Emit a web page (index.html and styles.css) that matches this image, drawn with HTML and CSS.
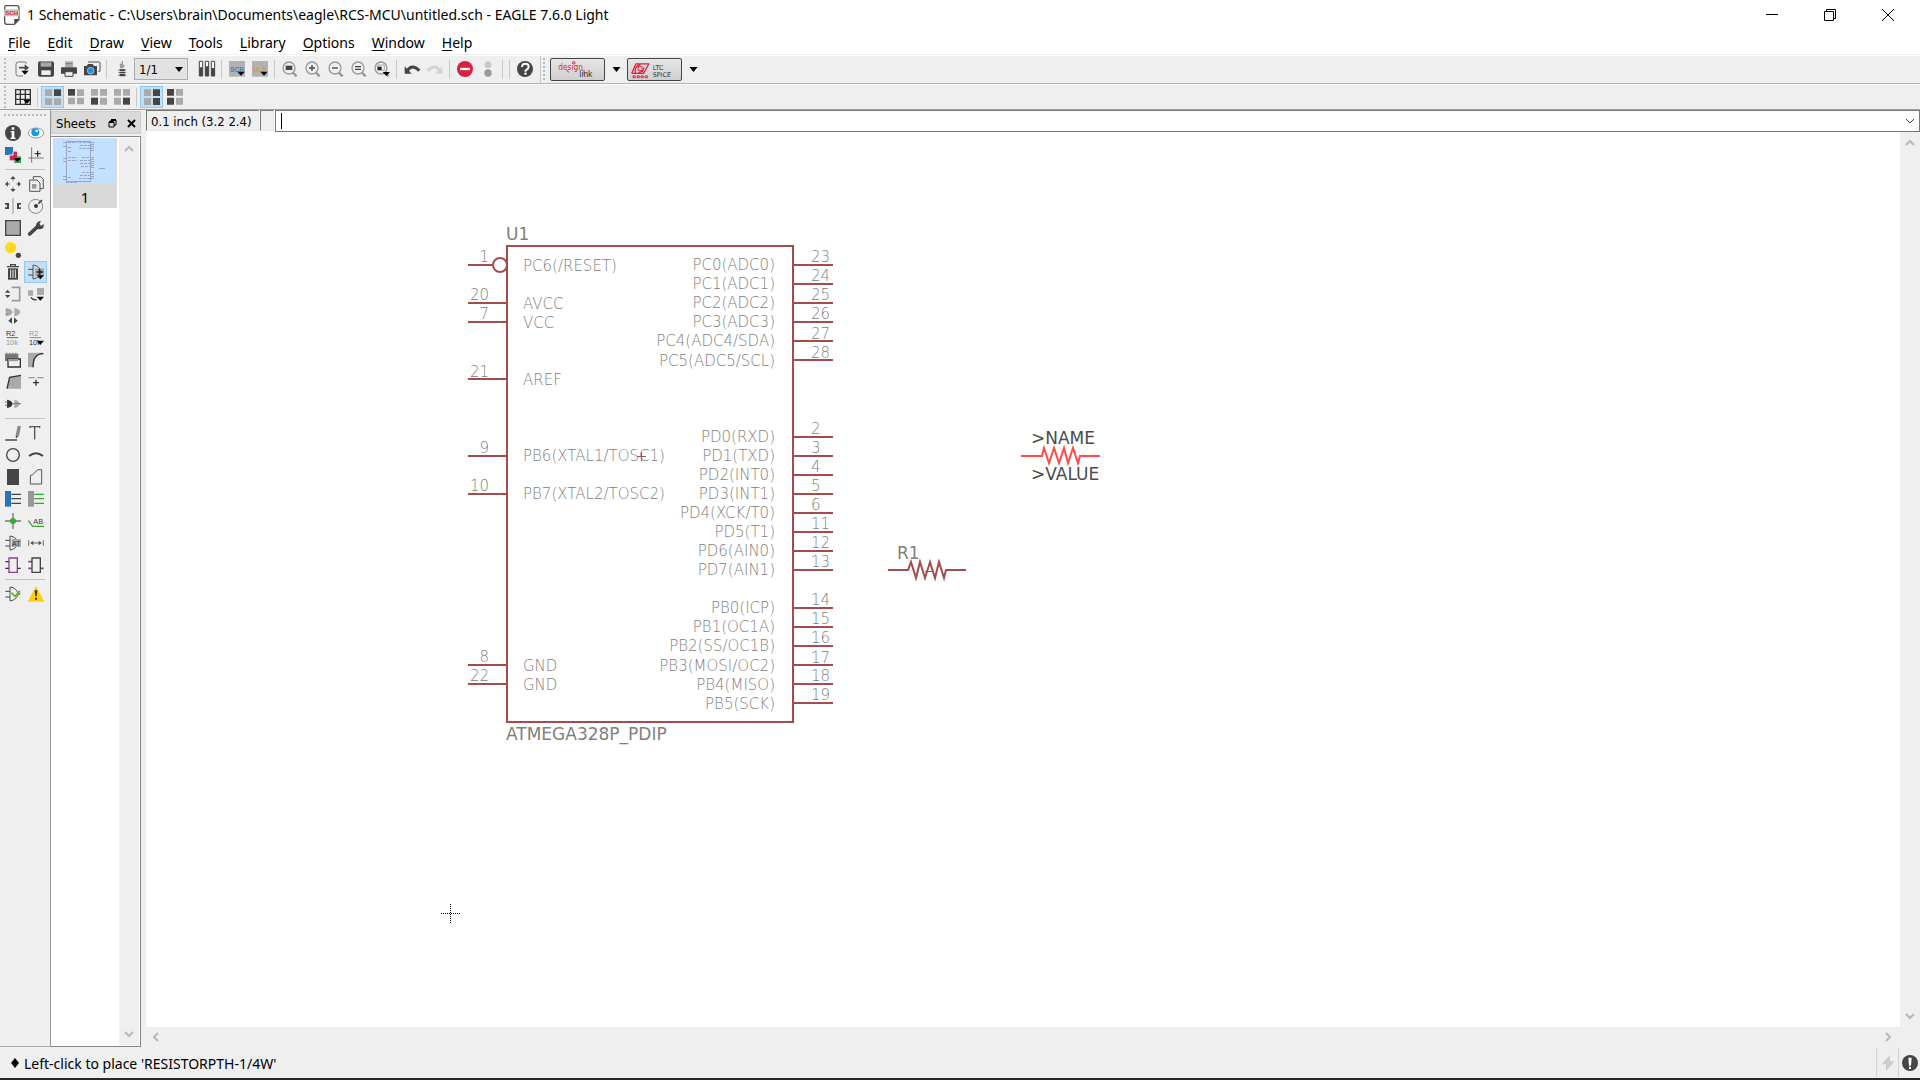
FILE: index.html
```html
<!DOCTYPE html>
<html lang="en">
<head>
<meta charset="utf-8">
<title>1 Schematic - EAGLE 7.6.0 Light</title>
<link rel="stylesheet" href="styles.css">
</head>
<body>
<svg class="defs" aria-hidden="true">
  <defs>
    <path id="drop" d="M19 29h22L30 41z" fill="#000"/>
    <g id="lens"><path d="M32 34l12 12" stroke="#999" stroke-width="7"/><circle cx="21" cy="21" r="18" fill="#efefef" stroke="#999" stroke-width="4"/></g>
    <g id="gate"><path d="M15 3q20 2 24 21q-4 18-24 21z" fill="none" stroke="#555" stroke-width="3"/><path d="M1 16h14M1 33h14M38 24h8" stroke="#444" stroke-width="3"/></g>
  </defs>
</svg>

<header class="titlebar">
  <svg class="app-icon" viewBox="0 0 48 60"><path d="M6 2h32q7 0 7 7v35L31 58H10q-8 0-8-8V9q0-7 4-7z" fill="#fff" stroke="#555" stroke-width="4"/><path d="M45 42H31v16z" fill="#444"/><rect x="0" y="13" width="46" height="21" fill="#c9c3c3"/><text x="23" y="31" class="app-icon-text">SCH</text></svg>
  <h1>1 Schematic - C:\Users\brain\Documents\eagle\RCS-MCU\untitled.sch - EAGLE 7.6.0 Light</h1>
  <div class="window-buttons">
    <button aria-label="Minimize"><svg viewBox="0 0 14 14"><path d="M1 6.5h12" class="win"/></svg></button>
    <button aria-label="Restore"><svg viewBox="0 0 14 14"><path d="M1.500 3.500h9v9h-9zM3.500 3.500v-2h9v9h-2" class="win"/></svg></button>
    <button aria-label="Close"><svg viewBox="0 0 14 14"><path d="M1 1l12 12M13 1L1 13" class="win"/></svg></button>
  </div>
</header>

<nav class="menubar">
  <a href="#file"><u>F</u>ile</a><a href="#edit"><u>E</u>dit</a><a href="#draw"><u>D</u>raw</a><a href="#view"><u>V</u>iew</a><a href="#tools"><u>T</u>ools</a><a href="#library"><u>L</u>ibrary</a><a href="#options"><u>O</u>ptions</a><a href="#window"><u>W</u>indow</a><a href="#help"><u>H</u>elp</a>
</nav>

<div class="toolbar">
  <span class="handle"></span>
  <button class="tool" aria-label="Open"><svg viewBox="0 0 48 48"><path d="M34 8V6q0-3-4-3H10Q3 3 3 10v28q0 7 7 7h14" fill="none" stroke="#777" stroke-width="3"/><path d="M12 20h22" stroke="#444" stroke-width="5"/><path d="M29 10l13 10-13 10z" fill="#444"/><use href="#drop"/></svg></button>
  <button class="tool" aria-label="Save"><svg viewBox="0 0 48 48"><path d="M6 1h36q6 0 6 6v34q0 6-6 6H6q-6 0-6-6V7q0-6 6-6z" fill="#454545"/><path d="M8 1h32v16H8z" fill="#aaa"/><path d="M10 28h28v14H10z" fill="#efefef"/><path d="M10 5h28" stroke="#666" stroke-width="2"/></svg></button>
  <button class="tool" aria-label="Print"><svg viewBox="0 0 48 48"><path d="M12 1h24v18H12z" fill="#aaa"/><path d="M14 8h20" stroke="#777" stroke-width="3"/><path d="M3 19h42q3 0 3 4v15H0V23q0-4 3-4z" fill="#454545"/><path d="M12 32h24v14H12z" fill="#efefef" stroke="#454545" stroke-width="3"/></svg></button>
  <button class="tool" aria-label="Export image"><svg viewBox="0 0 48 48"><path d="M12 3h34q2 0 2 3v25h-5" fill="none" stroke="#555" stroke-width="3"/><path d="M0 15h8l4-6h14l4 6h9v28H0z" fill="#454545"/><circle cx="20" cy="29" r="10" fill="#1696e0" stroke="#ddd" stroke-width="2"/></svg></button>
  <span class="sep"></span>
  <button class="tool" aria-label="Switch to board"><svg viewBox="0 0 48 48"><path d="M25 0v13" stroke="#999" stroke-width="4"/><path d="M17 7l15 5-4 10H18z" fill="#999"/><path d="M17 25h16v5H17zM17 32h16v5H17zM17 39h16v7H17z" fill="#454545"/><path d="M13 27h24M13 35h24M13 43h24" stroke="#454545" stroke-width="2"/></svg></button>
  <label class="sheet-select"><select aria-label="Sheet"><option>1/1</option></select><svg viewBox="0 0 8 5"><path d="M0 0h8L4 5z"/></svg></label>
  <span class="sep blank"></span>
  <button class="tool" aria-label="Use library"><svg viewBox="0 0 48 48"><path d="M1 1h10v44H1zM19 1h10v44H19zM37 1h10v44H37z" fill="#fff" stroke="#454545" stroke-width="3"/><path d="M1 19h10v26H1zM19 16h10v29H19zM37 21h10v24H37z" fill="#454545"/></svg></button>
  <span class="sep"></span>
  <button class="tool" aria-label="Script"><svg viewBox="0 0 48 48"><path d="M0 0h48v47H0z" fill="#b2b2b2"/><text x="24" y="32" class="tag blue">SCR</text><use href="#drop" x="6" y="3"/></svg></button>
  <button class="tool" aria-label="ULP"><svg viewBox="0 0 48 48"><path d="M0 0h48v47H0z" fill="#b2b2b2"/><text x="24" y="32" class="tag orange">ULP</text><use href="#drop" x="6" y="3"/></svg></button>
  <span class="sep"></span>
  <button class="tool" aria-label="Fit"><svg viewBox="0 0 48 48"><use href="#lens"/><path d="M11 14h20v13H11z" fill="#454545"/></svg></button>
  <button class="tool" aria-label="Zoom in"><svg viewBox="0 0 48 48"><use href="#lens"/><path d="M12 21h18M21 12v18" stroke="#454545" stroke-width="4"/></svg></button>
  <button class="tool" aria-label="Zoom out"><svg viewBox="0 0 48 48"><use href="#lens"/><path d="M12 21h18" stroke="#454545" stroke-width="4"/></svg></button>
  <button class="tool" aria-label="Redraw"><svg viewBox="0 0 48 48"><use href="#lens"/><path d="M12 17h18M12 25h18" stroke="#454545" stroke-width="4"/></svg></button>
  <button class="tool" aria-label="Select zoom"><svg viewBox="0 0 48 48"><use href="#lens"/><path d="M11 12h20v16H11z" fill="none" stroke="#888" stroke-width="2"/><path d="M11 17h12v10H11z" fill="#222"/><use href="#drop" x="7" y="4"/></svg></button>
  <span class="sep"></span>
  <button class="tool" aria-label="Undo"><svg viewBox="0 0 48 48"><path d="M10 29Q24 7 46 29" fill="none" stroke="#454545" stroke-width="9"/><path d="M2 16v22h21z" fill="#454545"/></svg></button>
  <button class="tool" aria-label="Redo"><svg viewBox="0 0 48 48"><path d="M38 29Q24 7 2 29" fill="none" stroke="#d2d2d2" stroke-width="9"/><path d="M46 16v22H25z" fill="#d2d2d2"/></svg></button>
  <span class="sep"></span>
  <button class="tool" aria-label="Stop"><svg viewBox="0 0 48 48"><circle cx="24" cy="24" r="24" fill="#dc1f3d"/><path d="M9 24h30" stroke="#fff" stroke-width="7"/></svg></button>
  <button class="tool" aria-label="Go"><svg viewBox="0 0 48 48"><circle cx="24" cy="11" r="10" fill="#c8c8c8"/><circle cx="24" cy="36" r="11" fill="#999"/></svg></button>
  <span class="sep"></span><span class="sep"></span>
  <button class="tool" aria-label="Help"><svg viewBox="0 0 48 48"><circle cx="24" cy="24" r="24" fill="#454545"/><path d="M15 18q0-10 10-10t10 9q0 5-6 9-4 2-4 6" fill="none" stroke="#fff" stroke-width="6"/><path d="M22 35h7v6h-7z" fill="#fff"/></svg></button>
  <span class="sep end"></span>
  <span class="handle"></span>
  <button class="brand" aria-label="Design link"><svg viewBox="0 0 165 66"><text x="22" y="34" class="logo red">design</text><text x="88" y="58" class="logo">link</text><circle cx="71" cy="12" r="4" fill="none" stroke="#dc1f3d" stroke-width="3"/><path d="M103 34v16M48 36l8 6" stroke="#dc1f3d" stroke-width="3"/></svg></button>
  <button class="more" aria-label="Design link menu"><svg viewBox="0 0 8 5"><path d="M0 0h8L4 5z"/></svg></button>
  <button class="brand" aria-label="LTC Spice"><svg viewBox="0 0 165 66"><path d="M24 15h42M11 45l13-30M11 45h37l17-30M22 45q-3-24 17-27M32 42q15 0 17-16" fill="none" stroke="#dc1f3d" stroke-width="4"/><path d="M31 24h12v12H31zM29 19l5 5M42 36l6 7" fill="none" stroke="#dc1f3d" stroke-width="3"/><path d="M15 53h7v6h-7zM28 53h7v6h-7zM40 53h7v6h-7zM53 53h7v6h-7z" fill="none" stroke="#dc1f3d" stroke-width="3"/><text x="77" y="35" class="spice">LTC</text><text x="77" y="57" class="spice">SPICE</text></svg></button>
  <button class="more" aria-label="LTC Spice menu"><svg viewBox="0 0 8 5"><path d="M0 0h8L4 5z"/></svg></button>
</div>

<div class="toolbar second">
  <span class="handle"></span>
  <button class="tool" aria-label="Grid"><svg viewBox="0 0 48 48"><path d="M2 2h44v44H2zM16 2v44M31 2v44M2 16h44M2 31h44" fill="none" stroke="#333" stroke-width="4"/><use href="#drop" x="6" y="3"/></svg></button>
  <span class="sep"></span>
  <button class="tool on" aria-label="Quadrant 1"><svg viewBox="0 0 48 48"><path d="M0 1h21v20H0zM0 28h21v20H0zM27 28h21v20H27z" fill="#aaa"/><path d="M27 1h21v20H27z" fill="#454545"/></svg></button>
  <button class="tool" aria-label="Quadrant 2"><svg viewBox="0 0 48 48"><path d="M27 1h21v20H27zM0 26h21v20H0zM27 26h21v20H27z" fill="#aaa"/><path d="M0 0h21v20H0z" fill="#454545"/></svg></button>
  <button class="tool" aria-label="Quadrant 3"><svg viewBox="0 0 48 48"><path d="M0 0h21v20H0zM27 0h21v20H27zM27 26h21v21H27z" fill="#aaa"/><path d="M0 26h21v21H0z" fill="#454545"/></svg></button>
  <button class="tool" aria-label="Quadrant 4"><svg viewBox="0 0 48 48"><path d="M0 0h21v20H0zM27 0h21v20H27zM0 26h21v21H0z" fill="#aaa"/><path d="M27 26h21v21H27z" fill="#454545"/></svg></button>
  <span class="sep"></span>
  <button class="tool on" aria-label="Right half"><svg viewBox="0 0 48 48"><path d="M0 1h21v20H0zM0 27h21v21H0z" fill="#aaa"/><path d="M27 1h21v20H27zM27 27h21v21H27z" fill="#454545"/></svg></button>
  <button class="tool" aria-label="Left half"><svg viewBox="0 0 48 48"><path d="M27 0h21v20H27zM27 26h21v21H27z" fill="#aaa"/><path d="M0 0h21v20H0zM0 26h21v21H0z" fill="#454545"/></svg></button>
</div>

<main class="workspace">
  <aside class="palette">
    <span class="handle wide"></span>
    <div class="tools">
      <button class="tool" aria-label="Info"><svg viewBox="0 0 48 48"><circle cx="24" cy="24" r="24" fill="#454545"/><path d="M20 7h8v7h-8zM17 18h11v20h4v4H16v-4h4V22h-3z" fill="#fff"/></svg></button>
      <button class="tool" aria-label="Show"><svg viewBox="0 0 48 48"><ellipse cx="24" cy="24" rx="23" ry="15" fill="#fff" stroke="#999" stroke-width="3"/><circle cx="22" cy="22" r="12" fill="#149be4"/><circle cx="26" cy="18" r="4" fill="#fff"/></svg></button>
      <button class="tool" aria-label="Layers"><svg viewBox="0 0 48 48"><path d="M28 28h20v20H28z" fill="#2ba84f"/><path d="M14 14h22v26H14z" fill="#dc1f4d"/><path d="M0 0h24v24H0z" fill="#2675bb"/><path d="M24 14v10H12" fill="none" stroke="#efefef" stroke-width="3"/><use href="#drop" x="7" y="4"/></svg></button>
      <button class="tool" aria-label="Mark"><svg viewBox="0 0 48 48"><path d="M11 1v46M1 33h46" stroke="#777" stroke-width="3"/><path d="M29 11v18M20 20h18" stroke="#333" stroke-width="4"/></svg></button>
    </div>
    <hr>
    <div class="tools">
      <button class="tool" aria-label="Move"><svg viewBox="0 0 48 48"><path d="M24 0l8 9H16zM24 48l8-9H16zM0 24l9-8v16zM48 24l-9-8v16z" fill="#454545"/><path d="M24 8v6M24 34v6M8 24h6M34 24h6" stroke="#888" stroke-width="4"/></svg></button>
      <button class="tool" aria-label="Copy"><svg viewBox="0 0 48 48"><path d="M16 10V2h22l8 8v28H36M5 12h22l9 9v25H5z" fill="none" stroke="#555" stroke-width="3"/><path d="M12 24h13v14H12z" fill="#999"/></svg></button>
      <button class="tool" aria-label="Mirror"><svg viewBox="0 0 48 48"><path d="M24 1v46" stroke="#aaa" stroke-width="4"/><path d="M0 15h12v18H0v-5h6v-8H0zM48 15H36v18h12v-5h-6v-8h6z" fill="#454545"/></svg></button>
      <button class="tool" aria-label="Rotate"><svg viewBox="0 0 48 48"><circle cx="23" cy="25" r="21" fill="none" stroke="#888" stroke-width="3"/><circle cx="24" cy="24" r="6" fill="#333"/><path d="M31 17l11-11" stroke="#444" stroke-width="5"/></svg></button>
      <button class="tool" aria-label="Group"><svg viewBox="0 0 48 48"><path d="M2 2h44v44H2z" fill="#aaa" stroke="#454545" stroke-width="4"/></svg></button>
      <button class="tool" aria-label="Change"><svg viewBox="0 0 48 48"><path d="M5 42L32 17" stroke="#454545" stroke-width="11" stroke-linecap="round"/><path d="M39 3l-5 10 5 5 8-6q3 16-13 16-12-1-10-13Q27 3 39 3z" fill="#454545"/></svg></button>
      <button class="tool" aria-label="Paste"><svg viewBox="0 0 48 48"><circle cx="17" cy="17" r="17" fill="#fed923"/><circle cx="40" cy="40" r="8" fill="#454545"/></svg></button>
      <span></span>
      <button class="tool" aria-label="Delete"><svg viewBox="0 0 48 48"><path d="M6 8h36M17 7V2h14v5" fill="none" stroke="#454545" stroke-width="4"/><path d="M9 13h30v34H9z" fill="#454545"/><path d="M17 17v25M24 17v25M31 17v25" stroke="#eee" stroke-width="3"/></svg></button>
      <button class="tool on" aria-label="Add"><svg viewBox="0 0 48 48"><path d="M21 13h27v23H21z" fill="#aaa"/><use href="#gate"/><path d="M34 15v18M26 24h18" stroke="#222" stroke-width="4"/><use href="#drop" x="7" y="5"/></svg></button>
      <button class="tool" aria-label="Pinswap"><svg viewBox="0 0 48 48"><path d="M20 4h24v40H20" fill="none" stroke="#999" stroke-width="5"/><path d="M0 20l8-9 8 9zM0 27l8 9 8-9z" fill="#454545"/></svg></button>
      <button class="tool" aria-label="Replace"><svg viewBox="0 0 48 48"><path d="M0 13h15v16H0zM27 6h21v21H27z" fill="#aaa"/><path d="M9 34q4 9 17 7" fill="none" stroke="#454545" stroke-width="4"/><use href="#drop" x="7" y="3"/></svg></button>
      <button class="tool" aria-label="Gateswap"><svg viewBox="0 0 48 48"><path d="M3 0q17 2 20 12Q20 23 3 25zM28 0q15 2 18 12-3 11-18 13z" fill="#aaa"/><path d="M0 7h9M0 18h9" stroke="#999" stroke-width="3"/><path d="M21 28v19l-11-9zM27 28v19l11-9z" fill="#454545"/></svg></button>
      <span></span>
      <button class="tool" aria-label="Name"><svg viewBox="0 0 48 48"><text x="3" y="17" class="rlabel">R2</text><path d="M5 23h34" stroke="#666" stroke-width="3"/><text x="3" y="46" class="rlabel pale">10k</text></svg></button>
      <button class="tool" aria-label="Value"><svg viewBox="0 0 48 48"><text x="3" y="17" class="rlabel pale">R2</text><path d="M5 23h34" stroke="#888" stroke-width="3"/><text x="3" y="46" class="rlabel">10k</text><use href="#drop" x="7" y="3"/></svg></button>
      <button class="tool" aria-label="Smash"><svg viewBox="0 0 48 48"><path d="M0 5h40v22H0z" fill="#777"/><path d="M5 2v6M14 2v6M23 2v6M32 2v6" stroke="#888" stroke-width="4"/><path d="M9 21h37v24H9z" fill="#efefef" stroke="#333" stroke-width="4"/><path d="M9 24h30" stroke="#999" stroke-width="7"/></svg></button>
      <button class="tool" aria-label="Miter"><svg viewBox="0 0 48 48"><path d="M0 2h46v5Q18 5 18 46H0z" fill="#aaa"/><path d="M15 46Q14 5 46 5" fill="none" stroke="#333" stroke-width="4"/></svg></button>
      <button class="tool" aria-label="Split"><svg viewBox="0 0 48 48"><path d="M12 10L48 4v40H6z" fill="#aaa"/><path d="M6 44l8-34L48 4" fill="none" stroke="#333" stroke-width="4"/></svg></button>
      <button class="tool" aria-label="Invoke"><svg viewBox="0 0 48 48"><path d="M1 11h19M28 11h19" stroke="#999" stroke-width="4"/><path d="M24 17v18M15 26h18" stroke="#333" stroke-width="4"/></svg></button>
      <button class="tool" aria-label="Optimize"><svg viewBox="0 0 48 48"><path d="M28 11q13 2 16 12-3 11-16 13z" fill="#aaa"/><path d="M6 11q14 2 17 12-3 11-17 13z" fill="#333"/><path d="M0 18h8M0 28h8M23 23h25" stroke="#777" stroke-width="3"/></svg></button>
      <span></span>
    </div>
    <hr>
    <div class="tools">
      <button class="tool" aria-label="Line"><svg viewBox="0 0 48 48"><path d="M43 3l-6 28" stroke="#888" stroke-width="10"/><path d="M32 31l9 2-8 7z" fill="#444"/><path d="M1 45h35" stroke="#333" stroke-width="4"/></svg></button>
      <button class="tool" aria-label="Text"><svg viewBox="0 0 48 48"><path d="M6 9V5h29v4M20 5v38" fill="none" stroke="#555" stroke-width="4"/></svg></button>
      <button class="tool" aria-label="Circle"><svg viewBox="0 0 48 48"><circle cx="24" cy="24" r="19" fill="none" stroke="#454545" stroke-width="4"/></svg></button>
      <button class="tool" aria-label="Arc"><svg viewBox="0 0 48 48"><path d="M3 27q21-17 42 0" fill="none" stroke="#454545" stroke-width="6"/></svg></button>
      <button class="tool" aria-label="Rectangle"><svg viewBox="0 0 48 48"><path d="M6 0h36v48H6z" fill="#454545"/></svg></button>
      <button class="tool" aria-label="Polygon"><svg viewBox="0 0 48 48"><path d="M7 45V20l7-3 10-10 6-5h11v43z" fill="none" stroke="#555" stroke-width="3"/></svg></button>
      <button class="tool" aria-label="Bus"><svg viewBox="0 0 48 48"><path d="M19 10h29M19 23h29M19 37h29" stroke="#454545" stroke-width="4"/><path d="M0 0h18v47H0z" fill="#2675bb"/></svg></button>
      <button class="tool" aria-label="Net"><svg viewBox="0 0 48 48"><path d="M19 10h29M19 23h29M19 37h29" stroke="#36a936" stroke-width="4"/><path d="M0 0h18v47H0z" fill="#999"/></svg></button>
      <button class="tool" aria-label="Junction"><svg viewBox="0 0 48 48"><path d="M24 0v48M0 24h48" stroke="#777" stroke-width="4"/><circle cx="24" cy="24" r="9" fill="#36a936"/></svg></button>
      <button class="tool" aria-label="Label"><svg viewBox="0 0 48 48"><path d="M1 23l13 17h34" fill="none" stroke="#36a936" stroke-width="4"/><text x="16" y="33" class="rlabel">AB</text></svg></button>
      <button class="tool" aria-label="Attribute"><svg viewBox="0 0 48 48"><use href="#gate"/><path d="M20 12h28v24H20z" fill="#aaa"/><text x="20" y="33" class="rlabel">AT</text></svg></button>
      <button class="tool" aria-label="Dimension"><svg viewBox="0 0 48 48"><path d="M2 16v16M46 16v16M8 24h32" stroke="#666" stroke-width="3"/><path d="M7 24l9-7v14zM41 24l-9-7v14z" fill="#555"/></svg></button>
      <button class="tool" aria-label="Module"><svg viewBox="0 0 48 48"><path d="M1 14h12M1 34h12M36 34h11" stroke="#333" stroke-width="4"/><path d="M12 3h25v43H12z" fill="#efefef" stroke="#8b3f9b" stroke-width="4"/></svg></button>
      <button class="tool" aria-label="Port"><svg viewBox="0 0 48 48"><path d="M1 14h12M1 34h12M36 34h11" stroke="#8b3f9b" stroke-width="5"/><path d="M12 3h25v43H12z" fill="#efefef" stroke="#454545" stroke-width="4"/></svg></button>
    </div>
    <hr>
    <div class="tools">
      <button class="tool" aria-label="ERC"><svg viewBox="0 0 48 48"><use href="#gate"/><path d="M19 20l11 11 15-16" fill="none" stroke="#6cb82c" stroke-width="6"/></svg></button>
      <button class="tool" aria-label="Errors"><svg viewBox="0 0 48 48"><path d="M24 2l23 44H1z" fill="#ffcd05" stroke="#ffcd05" stroke-width="2"/><path d="M20 13h8l-2 18h-4zM21 35h6v6h-6z" fill="#333"/></svg></button>
    </div>
  </aside>

  <section class="sheets">
    <header class="dock-title"><h2>Sheets</h2>
      <button aria-label="Float"><svg viewBox="0 0 9 9"><path d="M3 3V1h5v5H6M1 3h5v5H1z" fill="none" stroke="#000"/><path d="M3 1h5M1 3h5" stroke="#000" stroke-width="2"/></svg></button>
      <button aria-label="Close sheets"><svg viewBox="0 0 9 9"><path d="M1 1l7 7M8 1L1 8" stroke="#000" stroke-width="2"/></svg></button>
    </header>
    <div class="sheet-list">
      <div class="sheet">
        <svg class="thumb" viewBox="0 0 61 46"><g fill="none" stroke="#9aa3cc"><path d="M12.500 3.500h24v40h-24z"/><path d="M14 4.500h9M14 9.500h3M14 13.500h3M14 19.500h9M14 22.500h9M14 39.500h3M25 4.500h12M26 7.500h10M25 10.500h11M28 19.500h9M26 22.500h10M26 25.500h11M27 28.500h9M28 34.500h8M26 37.500h10M25 40.500h11M12 44.500h12" stroke-dasharray="3 1"/><path d="M9 4.500h4M9 8.500h4M9 20.500h4M9 23.500h4M9 38.500h4M9 41.500h4M36 4.500h4M36 6.500h4M36 8.500h4M36 10.500h4M36 12.500h4M36 19.500h4M36 21.500h4M36 23.500h4M36 25.500h4M36 27.500h4M36 29.500h4M36 34.500h4M36 36.500h4M36 38.500h4M36 40.500h4"/><path d="M45 30.500h6"/></g></svg>
        <span>1</span>
      </div>
      <div class="vscroll"><svg viewBox="0 0 10 7"><path d="M1 6l4-4 4 4"/></svg><svg viewBox="0 0 10 7"><path d="M1 1l4 4 4-4"/></svg></div>
    </div>
  </section>

  <section class="editor">
    <div class="command-row">
      <output class="coords">0.1 inch (3.2 2.4)</output>
      <span class="slot"></span>
      <div class="command"><span class="caret"></span><input type="text" aria-label="Command"><button aria-label="Command history"><svg viewBox="0 0 10 7"><path d="M1 1l4 4 4-4"/></svg></button></div>
    </div>
    <div class="sheet-area">
      <svg class="drawing">
        <g transform="translate(-146 -132)">
          <g class="pins">
            <path d="M507 246h286v476H507z"/>
            <path d="M468 265h24M468 303h39M468 322h39M468 379h39M468 456h39M468 494h39M468 665h39M468 684h39"/>
            <path d="M793 265h40M793 284h40M793 303h40M793 322h40M793 341h40M793 360h40M793 437h40M793 456h40M793 475h40M793 494h40M793 513h40M793 532h40M793 551h40M793 570h40M793 608h40M793 627h40M793 646h40M793 665h40M793 684h40M793 703h40"/>
            <circle cx="500" cy="265" r="7"/>
            <path d="M888 570h20l3-8 5 16 4-16 5 16 5-16 5 16 4-16 5 16 2-8h20"/>
            <path class="origin" d="M925 571.500h7"/>
            <path class="placing" d="M1021 456h21l2-8 5 15 5-15 5 15 5-15 4 15 5-15 5 15 2-7h20"/>
          </g>
          <path class="origin" d="M637 456.500h9M641.500 452v9"/>
          <path class="cursor" d="M441 913.500h19M450.500 904v19"/>
          <g class="pin-text">
            <text x="523" y="271">PC6(/RESET)</text><text x="523" y="309">AVCC</text><text x="523" y="328">VCC</text><text x="523" y="385">AREF</text><text x="523" y="461">PB6(XTAL1/TOSC1)</text><text x="523" y="499">PB7(XTAL2/TOSC2)</text><text x="523" y="671">GND</text><text x="523" y="690">GND</text>
          </g>
          <g class="pin-text end">
            <text x="775" y="270">PC0(ADC0)</text><text x="775" y="289">PC1(ADC1)</text><text x="775" y="308">PC2(ADC2)</text><text x="775" y="327">PC3(ADC3)</text><text x="775" y="346">PC4(ADC4/SDA)</text><text x="775" y="366">PC5(ADC5/SCL)</text>
            <text x="775" y="442">PD0(RXD)</text><text x="775" y="461">PD1(TXD)</text><text x="775" y="480">PD2(INT0)</text><text x="775" y="499">PD3(INT1)</text><text x="775" y="518">PD4(XCK/T0)</text><text x="775" y="537">PD5(T1)</text><text x="775" y="556">PD6(AIN0)</text><text x="775" y="575">PD7(AIN1)</text>
            <text x="775" y="613">PB0(ICP)</text><text x="775" y="632">PB1(OC1A)</text><text x="775" y="651">PB2(SS/OC1B)</text><text x="775" y="671">PB3(MOSI/OC2)</text><text x="775" y="690">PB4(MISO)</text><text x="775" y="709">PB5(SCK)</text>
            <text x="489" y="262">1</text><text x="489" y="300">20</text><text x="489" y="319">7</text><text x="489" y="377">21</text><text x="489" y="453">9</text><text x="489" y="491">10</text><text x="489" y="662">8</text><text x="489" y="681">22</text>
          </g>
          <g class="pin-text">
            <text x="811" y="262">23</text><text x="811" y="281">24</text><text x="811" y="300">25</text><text x="811" y="319">26</text><text x="811" y="339">27</text><text x="811" y="358">28</text>
            <text x="811" y="434">2</text><text x="811" y="453">3</text><text x="811" y="472">4</text><text x="811" y="491">5</text><text x="811" y="510">6</text><text x="811" y="529">11</text><text x="811" y="548">12</text><text x="811" y="567">13</text>
            <text x="811" y="605">14</text><text x="811" y="624">15</text><text x="811" y="643">16</text><text x="811" y="663">17</text><text x="811" y="681">18</text><text x="811" y="700">19</text>
          </g>
          <g class="part-text">
            <text x="506" y="240">U1</text><text x="506" y="740">ATMEGA328P_PDIP</text><text x="897" y="559">R1</text>
            <text x="1031" y="444" class="dark">&gt;NAME</text><text x="1031" y="480" class="dark">&gt;VALUE</text>
          </g>
        </g>
      </svg>
      <div class="vscroll"><svg viewBox="0 0 10 7"><path d="M1 6l4-4 4 4"/></svg><svg viewBox="0 0 10 7"><path d="M1 1l4 4 4-4"/></svg></div>
      <div class="hscroll"><svg viewBox="0 0 7 10"><path d="M6 1L2 5l4 4"/></svg><svg viewBox="0 0 7 10"><path d="M1 1l4 4-4 4"/></svg></div>
    </div>
  </section>
</main>

<footer class="statusbar">
  <svg class="diamond" viewBox="0 0 8 10"><path d="M4 0l4 5-4 5-4-5z"/></svg>
  <p>Left-click to place 'RESISTORPTH-1/4W'</p>
  <span class="status-cell"><svg viewBox="0 0 48 48"><path d="M30 0L4 28h14v20l26-29H30z" fill="#ccc"/></svg></span>
  <span class="status-cell"><svg viewBox="0 0 48 48"><circle cx="24" cy="24" r="24" fill="#454545"/><path d="M19 8h10l-2 24h-6zM21 35h6v7h-6z" fill="#fff"/></svg></span>
</footer>
</body>
</html>
```
FILE: styles.css
```css
* { box-sizing: border-box; }
body {
  margin: 0;
  height: 100vh;
  display: flex;
  flex-direction: column;
  overflow: hidden;
  background: #efefef;
  color: #000;
  font: 15px/20px "Noto Sans", sans-serif;
}
button { border: 0; padding: 0; background: none; display: grid; place-items: center; }
h1, h2, p { margin: 0; font: inherit; }
svg { display: block; }
.defs { position: absolute; width: 0; height: 0; }

.titlebar { display: flex; align-items: center; height: 29px; padding-left: 4px; background: #fff; flex: none; }
.titlebar h1 { margin-left: 7px; flex: 1; font-size: 14px; }
.app-icon { width: 16px; height: 20px; }
.app-icon-text { font: bold 18px "Liberation Sans", sans-serif; fill: #d8303c; text-anchor: middle; }
.window-buttons { display: flex; padding-right: 3px; }
.window-buttons button { width: 58px; height: 28px; }
.window-buttons svg { width: 14px; height: 14px; }
.win { fill: none; stroke: #000; }

.menubar { display: flex; gap: 17px; height: 27px; padding: 4px 8px 0; background: #fff; border-bottom: 1px solid #fff; box-shadow: inset 0 -1px #efefef; flex: none; font-size: 14px; }
.menubar a { color: inherit; text-decoration: none; }
.menubar u { text-underline-offset: 2px; }

.toolbar { display: flex; align-items: center; height: 28px; flex: none; border-bottom: 1px solid #b4b4b4; box-shadow: 0 1px #fff; margin-bottom: 1px; padding: 0 0 1px 4px; }
.toolbar.second { height: 25px; border-bottom-color: #a0a0a0; margin-bottom: 0; padding-bottom: 0; box-shadow: none; }
.handle { width: 2px; height: 22px; margin-right: 5px; background: repeating-linear-gradient(#bbb 0 2px, transparent 2px 4px); }
.handle.wide { display: block; width: 42px; height: 2px; margin: 0 0 6px; background: repeating-linear-gradient(90deg, #bbb 0 2px, transparent 2px 4px); }
.tool { width: 23px; height: 22px; flex: none; }
.tool svg { width: 16px; height: 16px; overflow: visible; }
.tool.on { background: #c4def4; border: 1px solid #90c8f6; }
.sep { width: 7px; height: 19px; background: linear-gradient(#c8c8c8, #c8c8c8) center / 1px 100% no-repeat; }
.sep.blank { background: none; }
.sep.end { width: 5px; height: 27px; background-position: right; margin-right: 2px; }
.tag { font: bold 20px "Liberation Sans", sans-serif; text-anchor: middle; }
.blue { fill: #3f83c8; }
.orange { fill: #e5933c; }
.rlabel { font: 22px "Liberation Sans", sans-serif; fill: #333; }
.pale { fill: #999; }

.sheet-select { display: grid; width: 54px; height: 22px; align-items: center; margin-left: 1px; }
.sheet-select > * { grid-area: 1 / 1; }
.sheet-select select { appearance: none; width: 54px; height: 22px; border: 1px solid #adadad; border-radius: 0; background: #e2e2e2; padding: 0 4px; font: 13px "DejaVu Sans Condensed", "DejaVu Sans", sans-serif; color: #000; }
.sheet-select svg { justify-self: end; margin-right: 5px; width: 8px; height: 5px; pointer-events: none; }
.brand { width: 55px; height: 23px; border: 1px solid #444; border-radius: 2px; background: linear-gradient(#e6e6e6, #cfcfcf); }
.brand svg { width: 53px; height: 21px; }
.more { width: 22px; height: 22px; }
.more svg { width: 9px; height: 5px; }
.logo { font: 26px "DejaVu Sans Condensed", "DejaVu Sans", sans-serif; fill: #222; }
.logo.red { fill: #dc1f3d; }
.spice { font: 20px "DejaVu Sans", sans-serif; fill: #333; }

.workspace { flex: 1; display: flex; min-height: 0; }
.palette { width: 51px; padding: 4px 0 0 1px; border-right: 1px solid #999; border-bottom: 1px solid #aaa; }
.palette .handle { margin-left: 3px; }
.palette hr { width: 40px; height: 1px; margin: 3px 0 3px 4px; border: 0; background: #c4c4c4; }
.tools { display: grid; grid-template-columns: 23px 23px; grid-auto-rows: 22px; }

.sheets { width: 90px; display: flex; flex-direction: column; padding-top: 1px; }
.dock-title { display: flex; align-items: center; gap: 10px; height: 23px; padding: 1px 4px 0; background: #dadada; border: 1px solid #cdcdcd; }
.dock-title h2 { flex: 1; font: 13px "DejaVu Sans Condensed", "DejaVu Sans", sans-serif; }
.dock-title svg { width: 9px; height: 9px; }
.sheet-list { flex: 1; display: flex; justify-content: space-between; margin-top: 2px; border: 1px solid #828790; border-left: 0; background: #fff; padding: 1px 1px 1px 2px; }
.sheet { width: 64px; height: 70px; background: #d9d9d9; text-align: center; padding: 0 1px; }
.sheet span { display: block; padding-top: 3px; }
.thumb { width: 61px; height: 46px; background: #c4e0ff; }
.vscroll { width: 20px; background: #efefef; display: flex; flex-direction: column; align-items: center; justify-content: space-between; padding: 7px 0; }
.vscroll svg { width: 10px; height: 7px; }
.vscroll path, .hscroll path { fill: none; stroke: #b8b8b8; stroke-width: 2; }

.editor { flex: 1; display: flex; flex-direction: column; min-width: 0; padding-left: 5px; }
.command-row { display: flex; height: 22px; background: #fff; }
.coords { width: 113px; height: 21px; margin-right: 1px; padding: 1px 0 0 4px; border: 1px solid #e8e8e8; border-left-color: #777; border-top: 1px solid #777; background: #efefef; font: 13px/19px "DejaVu Sans Condensed", "DejaVu Sans", sans-serif; white-space: nowrap; }
.slot { width: 14px; height: 21px; margin-right: 1px; border: 1px solid #e8e8e8; border-left-color: #777; border-top: 1px solid #777; background: #efefef; }
.command { flex: 1; display: flex; align-items: center; border: 1px solid #777; background: #fff; padding-left: 5px; }
.caret { width: 1px; height: 16px; background: #000; }
.command input { flex: 1; min-width: 0; border: 0; outline: 0; padding: 0 2px; height: 18px; background: none; font: 13px "DejaVu Sans Condensed", "DejaVu Sans", sans-serif; }
.command button { width: 18px; height: 20px; }
.command svg { width: 10px; height: 7px; }
.command path { fill: none; stroke: #444; }
.sheet-area { flex: 1; min-height: 0; display: grid; grid-template: minmax(0, 1fr) 20px / minmax(0, 1fr) 20px; }
.drawing { width: 100%; height: 100%; background: #fff; }
.hscroll { grid-column: 1; display: flex; align-items: center; justify-content: space-between; padding: 0 8px 0 6px; }
.hscroll svg { width: 7px; height: 10px; }

.pins { fill: none; stroke: #a54b4b; stroke-width: 2; }
.placing { stroke: #ff4b4b; }
.origin { stroke: #a54b4b; stroke-width: 1; }
.cursor { stroke: #000; stroke-dasharray: 1 1; }
.pin-text { font: 200 15px "DejaVu Sans Light", "DejaVu Sans", sans-serif; fill: #808080; }
.end { text-anchor: end; }
.part-text { font: 17px "DejaVu Sans", sans-serif; fill: #808080; }
.dark { fill: #4b4b4b; }

.statusbar { flex: none; display: flex; align-items: center; height: 33px; border-bottom: 2px solid #292627; font-size: 14px; padding-left: 11px; }
.diamond { width: 8px; height: 10px; margin-right: 5px; }
.statusbar p { flex: 1; padding-top: 2px; }
.status-cell { width: 22px; height: 29px; display: grid; place-items: center; border-left: 1px solid #d2d2d2; }
.status-cell svg { width: 16px; height: 16px; }
```
